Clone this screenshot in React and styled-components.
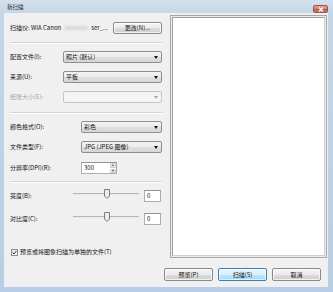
import React from 'react';
import styled, { createGlobalStyle } from 'styled-components';

const Global = createGlobalStyle`
  html, body { margin: 0; padding: 0; background: #fff; }
  body { font-family: "Noto Sans CJK SC", "Noto Sans", sans-serif; }
  * { box-sizing: border-box; }
`;

const Window = styled.div`
  width: 333px;
  height: 292px;
  background: linear-gradient(180deg, #d6e1ed 0px, #c4d6e9 14px, #b7cee6 100%);
  display: flex;
  flex-direction: column;
`;

const TitleBar = styled.div`
  height: 13px;
  display: flex;
  align-items: flex-start;
  justify-content: space-between;
  padding: 0 5px 0 7px;
`;

const Title = styled.span`
  font-size: 5.5px;
  line-height: 1;
  margin-top: 5px;
  color: #1a1a1a;
`;

const CloseButton = styled.div`
  width: 15px;
  height: 8px;
  margin-top: 5px;
  border: 1px solid #8c5a55;
  border-radius: 2px;
  background: linear-gradient(180deg, #e6a496 0%, #d47b6b 50%, #c65a48 51%, #cf7262 100%);
  display: flex;
  align-items: center;
  justify-content: center;
`;

const Client = styled.div`
  flex: 1;
  margin: 0 5px 5px 4px;
  background: #f0f0f0;
  display: flex;
  flex-direction: column;
  padding-top: 2px;
`;

const Top = styled.div`
  display: flex;
`;

const LeftPanel = styled.div`
  width: 166px;
  padding: 0 8px 0 6px;
  display: flex;
  flex-direction: column;
`;

const Row = styled.div`
  display: flex;
  align-items: center;
  height: ${p => p.$h || 12}px;
  margin-top: ${p => p.$top}px;
`;

const Label = styled.span`
  width: ${p => p.$w}px;
  flex: none;
  font-size: 6px;
  line-height: 1;
  white-space: nowrap;
  color: ${p => (p.$disabled ? '#a3a3a3' : '#111')};
`;

const Text = styled.span`
  font-size: 6px;
  line-height: 1;
  white-space: nowrap;
  color: #111;
`;

const Redacted = styled.span`
  display: inline-block;
  width: 23px;
  height: 4px;
  margin: 0 3px 0 4px;
  background: #d9d9d9;
  filter: blur(0.8px);
`;

const Separator = styled.div`
  height: 2px;
  margin-top: ${p => p.$top}px;
  border-top: 1px solid #d5d5d5;
  border-bottom: 1px solid #ffffff;
`;

const Button = styled.div`
  width: 49px;
  height: ${p => p.$h || 13}px;
  margin-left: ${p => (p.$auto ? 'auto' : '0')};
  border: 1px solid ${p => (p.$focused ? '#3c7fb1' : '#8a8a8a')};
  border-radius: 2px;
  background: ${p =>
    p.$focused
      ? 'linear-gradient(180deg, #eaf6fd 0%, #d9f0fc 50%, #bee6fd 51%, #a7d9f5 100%)'
      : 'linear-gradient(180deg, #f4f4f4 0%, #ebebeb 50%, #dddddd 51%, #cfcfcf 100%)'};
  box-shadow: inset 0 0 0 1px ${p => (p.$focused ? 'rgba(255,255,255,0.6)' : 'rgba(255,255,255,0.7)')};
  display: flex;
  align-items: center;
  justify-content: center;
  font-size: 6px;
  line-height: 1;
  color: #111;
  white-space: nowrap;
`;

const Combo = styled.div`
  flex: 1;
  height: 12px;
  border: 1px solid ${p => (p.$disabled ? '#c3c6c9' : '#8e8f8f')};
  border-radius: 2px;
  background: ${p =>
    p.$disabled
      ? '#f4f4f4'
      : 'linear-gradient(180deg, #f3f3f3 0%, #ececec 50%, #e0e0e0 51%, #d6d6d6 100%)'};
  display: flex;
  align-items: center;
  justify-content: space-between;
  padding: 0 3px 0 2px;
  font-size: 6px;
  line-height: 1;
  color: #111;
  white-space: nowrap;
`;

const Arrow = styled.span`
  width: 0;
  height: 0;
  border-left: 2px solid transparent;
  border-right: 2px solid transparent;
  border-top: 3px solid ${p => (p.$disabled ? '#a8a8a8' : '#111')};
`;

const Edit = styled.div`
  width: ${p => p.$w}px;
  height: 12px;
  margin-left: ${p => p.$left || 0}px;
  background: #fff;
  border: 1px solid #abadb3;
  border-top-color: #8e9399;
  display: flex;
  align-items: center;
  padding-left: 2px;
  font-size: 6px;
  line-height: 1;
  color: #111;
`;

const Spin = styled.div`
  width: 36px;
  height: 12px;
  background: #fff;
  border: 1px solid #abadb3;
  border-top-color: #8e9399;
  display: flex;
  align-items: center;
  font-size: 6px;
  line-height: 1;
  color: #111;
`;

const SpinText = styled.span`
  flex: 1;
  padding-left: 2px;
`;

const SpinButtons = styled.div`
  width: 7px;
  height: 100%;
  display: flex;
  flex-direction: column;
  gap: 1px;
  padding: 0 0 0 1px;
`;

const SpinHalf = styled.div`
  flex: 1;
  border: 1px solid #c8cbd0;
  border-radius: 1px;
  background: linear-gradient(180deg, #f6f6f6, #e4e4e4);
  display: flex;
  align-items: center;
  justify-content: center;
`;

const Tri = styled.span`
  width: 0;
  height: 0;
  border-left: 1.5px solid transparent;
  border-right: 1.5px solid transparent;
  ${p => (p.$up ? 'border-bottom: 2px solid #555;' : 'border-top: 2px solid #555;')}
`;

const SliderWrap = styled.div`
  position: relative;
  width: 66px;
  height: 12px;
  align-self: flex-start;
`;

const Track = styled.div`
  margin-top: 3px;
  height: 2px;
  border-top: 1px solid #b7b7b7;
  border-bottom: 1px solid #e9e9e9;
  background: #dcdcdc;
`;

const Thumb = styled.svg`
  position: absolute;
  left: 31px;
  top: -1px;
`;

const CheckBox = styled.div`
  width: 7px;
  height: 7px;
  flex: none;
  margin: 0 2px 0 1px;
  border: 1px solid #8f8f8f;
  background: linear-gradient(135deg, #e4e4e4, #f8f8f8);
  display: flex;
  align-items: center;
  justify-content: center;
`;

const Preview = styled.div`
  width: 157px;
  height: 243px;
  border: 1px solid #a7a7a7;
  padding: 1px;
  background: #ececec;
`;

const PreviewInner = styled.div`
  width: 100%;
  height: 100%;
  background: #fff;
  border: 1px solid #9f9f9f;
  border-right-color: #cfcfcf;
  border-bottom-color: #cfcfcf;
`;

const ButtonRow = styled.div`
  display: flex;
  justify-content: flex-end;
  gap: 5px;
  margin-top: 10px;
  padding-right: 7px;
`;

function ComboRow({ top, label, w, value, disabled }) {
  return (
    <Row $top={top}>
      <Label $w={w} $disabled={disabled}>{label}</Label>
      <Combo $disabled={disabled}>
        <span>{value}</span>
        <Arrow $disabled={disabled} />
      </Combo>
    </Row>
  );
}

function SliderRow({ top, label }) {
  return (
    <Row $top={top}>
      <Label $w={63}>{label}</Label>
      <SliderWrap>
        <Track />
        <Thumb width="6" height="10" viewBox="0 0 6 10">
          <path d="M0.5 0.5 H5.5 V7 L3 9.5 L0.5 7 Z" fill="#ececec" stroke="#7c7c7c" strokeWidth="1" />
        </Thumb>
      </SliderWrap>
      <Edit $w={17} $left={5}>0</Edit>
    </Row>
  );
}

export default function App() {
  return (
    <>
      <Global />
      <Window>
        <TitleBar>
          <Title>新扫描</Title>
          <CloseButton>
            <svg width="6" height="5" viewBox="0 0 6 5">
              <path d="M1 0.5 L5 4.5 M5 0.5 L1 4.5" stroke="#fff" strokeWidth="1.3" />
            </svg>
          </CloseButton>
        </TitleBar>
        <Client>
          <Top>
            <LeftPanel>
              <Row $top={7}>
                <Text>扫描仪: WIA Canon</Text>
                <Redacted />
                <Text>ser_...</Text>
                <Button $auto $h={12}>更改(N)...</Button>
              </Row>
              <Separator $top={8} />
              <ComboRow top={7} w={53} label="配置文件(I):" value="照片 (默认)" />
              <ComboRow top={8} w={53} label="来源(U):" value="平板" />
              <ComboRow top={8} w={53} label="纸张大小(E):" value="" disabled />
              <Separator $top={9} />
              <ComboRow top={7} w={71} label="颜色格式(O):" value="彩色" />
              <ComboRow top={8} w={71} label="文件类型(F):" value="JPG (JPEG 图像)" />
              <Row $top={9}>
                <Label $w={71}>分辨率(DPI)(R):</Label>
                <Spin>
                  <SpinText>300</SpinText>
                  <SpinButtons>
                    <SpinHalf><Tri $up /></SpinHalf>
                    <SpinHalf><Tri /></SpinHalf>
                  </SpinButtons>
                </Spin>
              </Row>
              <Separator $top={7} />
              <SliderRow top={7} label="亮度(B):" />
              <SliderRow top={11} label="对比度(C):" />
              <Row $top={23} $h={8}>
                <CheckBox>
                  <svg width="5" height="5" viewBox="0 0 5 5">
                    <path d="M0.6 2.6 L2 4 L4.5 0.8" fill="none" stroke="#2a3a5a" strokeWidth="1" />
                  </svg>
                </CheckBox>
                <Text>预览或将图象扫描为单独的文件(T)</Text>
              </Row>
            </LeftPanel>
            <Preview>
              <PreviewInner />
            </Preview>
          </Top>
          <ButtonRow>
            <Button>预览(P)</Button>
            <Button $focused>扫描(S)</Button>
            <Button>取消</Button>
          </ButtonRow>
        </Client>
      </Window>
    </>
  );
}
